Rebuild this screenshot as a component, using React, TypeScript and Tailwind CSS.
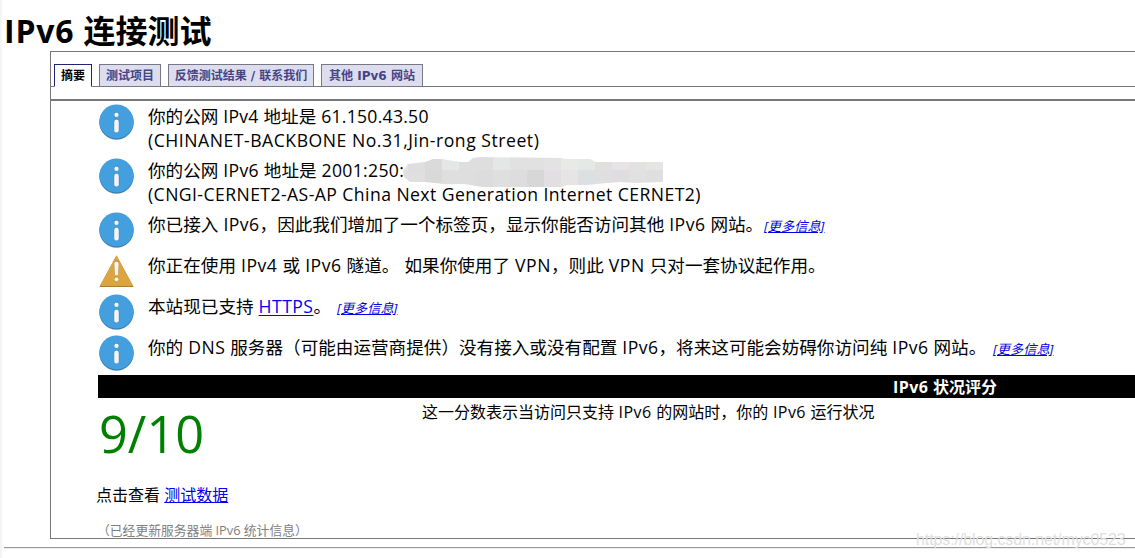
import React from 'react';

type Segment = {
  text: string;
  tracking?: string;
  link?: boolean;
};

interface Message {
  id: string;
  icon: 'info' | 'warning';
  lines: Segment[][];
  more?: string;
  masked?: boolean;
}

const tabs = [
  { label: '摘要', width: 'w-[38px]' },
  { label: '测试项目', width: 'w-[62px]' },
  { label: '反馈测试结果 / 联系我们', width: 'w-[146px]' },
  { label: '其他 IPv6 网站', width: 'w-[102px]' },
];

const messages: Message[] = [
  {
    id: 'ipv4',
    icon: 'info',
    lines: [
      [{ text: '你的公网 IPv4 地址是 61.150.43.50', tracking: 'tracking-[0.27px]' }],
      [{ text: '(CHINANET-BACKBONE No.31,Jin-rong Street)', tracking: 'tracking-[0.53px]' }],
    ],
  },
  {
    id: 'ipv6',
    icon: 'info',
    lines: [
      [{ text: '你的公网 IPv6 地址是 2001:250:', tracking: 'tracking-[0.33px]' }],
      [{ text: '(CNGI-CERNET2-AS-AP China Next Generation Internet CERNET2)', tracking: 'tracking-[0.43px]' }],
    ],
    masked: true,
  },
  {
    id: 'tab',
    icon: 'info',
    lines: [[{ text: '你已接入 IPv6，因此我们增加了一个标签页，显示你能否访问其他 IPv6 网站。' }]],
    more: 'left-[616px]',
  },
  {
    id: 'tunnel',
    icon: 'warning',
    lines: [[{ text: '你正在使用 IPv4 或 IPv6 隧道。 如果你使用了 VPN，则此 VPN 只对一套协议起作用。', tracking: 'tracking-[0.5px]' }]],
  },
  {
    id: 'https',
    icon: 'info',
    lines: [[{ text: '本站现已支持 ' }, { text: 'HTTPS', link: true }, { text: '。' }]],
    more: 'left-[189px]',
  },
  {
    id: 'dns',
    icon: 'info',
    lines: [[{ text: '你的 DNS 服务器（可能由运营商提供）没有接入或没有配置 IPv6，将来这可能会妨碍你访问纯 IPv6 网站。' }]],
    more: 'left-[845px]',
  },
];

// Latin runs are set slightly wider than the Chinese text around them
function MixedText({ text, tracking = 'tracking-[0.45px]' }: { text: string; tracking?: string }) {
  return (
    <>
      {text.split(/([ -~]+)/).map((part, i) =>
        i % 2 === 1 ? <span key={i} className={tracking}>{part}</span> : part
      )}
    </>
  );
}

function InfoIcon() {
  return (
    <svg className="block h-9 w-[35px]" viewBox="0 0 35 36">
      <ellipse cx="17.5" cy="19" rx="15.5" ry="17" fill="#d5d8da" />
      <circle cx="17.5" cy="18.3" r="17.2" fill="#3778a8" />
      <circle cx="17.5" cy="17.5" r="17.1" fill="#449fde" />
      <circle cx="17.5" cy="10.2" r="2.5" fill="#3380b8" />
      <rect x="14.8" y="14.9" width="5.4" height="13" rx="2.7" fill="#3380b8" />
      <circle cx="17.5" cy="10.8" r="2.2" fill="#f4f4f4" />
      <rect x="15.2" y="15.6" width="4.6" height="12.9" rx="2.3" fill="#f4f4f4" />
    </svg>
  );
}

function WarningIcon() {
  return (
    <svg className="block h-9 w-[35px]" viewBox="0 0 35 36">
      <path d="M17.5 2.6 34.6 34H.4Z" fill="#a97d2c" />
      <path d="M17.5 2.3 34.2 33H.8Z" fill="#dca440" />
      <path d="M15 10.2q0-2.6 2.5-2.6t2.5 2.6l-.6 10.6q-1.9 1.5-3.8 0Z" fill="#b9852d" />
      <path d="M15.3 10.8q0-2.3 2.2-2.3t2.2 2.3l-.6 11q-1.6 1-3.2 0Z" fill="#f4f4f4" />
      <circle cx="17.5" cy="25.8" r="2.4" fill="#b9852d" />
      <circle cx="17.5" cy="26.3" r="2" fill="#f4f4f4" />
    </svg>
  );
}

// Pixelated smudge covering the rest of the address
function AddressMask() {
  const top = ['#e5e5e5', '#dedede', '#dadada', '#e4e7e5', '#dedede', '#dedede', '#e4e7e5', '#e1e1e1', '#e1e1e1', '#e3e3e3', '#e8eae8', '#e6e8e6', '#e2e0de', '#e8e4e6', '#e2e2e2', '#e4e6e4', '#dcdcdc'];
  const bottom = ['#e0e0e0', '#dfdfdf', '#d9d9d9', '#dfdfdf', '#dedede', '#dcdcdc', '#dfdfdf', '#dddddd', '#d7d7d7', '#e1dfe1', '#e6e4e4', '#dce0e2', '#dfdfdf', '#dfdddf', '#e1e1e1', '#dfdfdf', '#dfe0e3'];
  return (
    <svg className="absolute -top-px left-[254px] h-[31px] w-[262px]" viewBox="402 157 262 31">
      <clipPath id="smudge">
        <path d="M403 171 408 164 425 162 433 159 442 159 460 162 468 162 473 158 480 157 560 158 567 159 590 159 596 162 663 162V182L635 183 620 182 596 184 588 185 567 185 561 187H482L464 184H444L425 182H410L404 177Z" />
      </clipPath>
      <g clipPath="url(#smudge)">
        {top.map((fill, i) => (
          <rect key={i} x={391 + i * 17} y="153" width="17.2" height="17.2" fill={fill} />
        ))}
        {bottom.map((fill, i) => (
          <rect key={i} x={391 + i * 17} y="170" width="17.2" height="18" fill={fill} />
        ))}
      </g>
    </svg>
  );
}

function MessageRow({ message }: { message: Message }) {
  return (
    <div className="flex gap-3.5 pb-[5px] pl-[48px] pt-px">
      <div className="h-[35px] w-[35px] shrink-0">{message.icon === 'info' ? <InfoIcon /> : <WarningIcon />}</div>
      <div className="relative whitespace-pre text-[17.6px] leading-6">
        {message.lines.map((line, i) => (
          <p key={i}>
            {line.map((segment, j) =>
              segment.link ? (
                <a key={j} className="tracking-[0.45px] text-[#0000ee] underline underline-offset-2">{segment.text}</a>
              ) : (
                <MixedText key={j} text={segment.text} tracking={segment.tracking} />
              )
            )}
          </p>
        ))}
        {message.more && (
          <a className={`absolute top-1.5 ${message.more} bg-[#fffff0] text-[13.2px] italic leading-[17px] text-[#0000ee] underline`}>
            [更多信息]
          </a>
        )}
        {message.masked && <AddressMask />}
      </div>
    </div>
  );
}

export default function App() {
  return (
    <div className="relative h-[558px] w-[1135px] overflow-hidden bg-white font-['Open_Sans','Noto_Sans_CJK_SC',sans-serif] text-black [font-kerning:none]">
      <div className="absolute left-0 top-0 h-full w-[3px] bg-linear-to-r from-[#f0f0f0] to-white" />
      <h1 className="h-[51px] whitespace-nowrap pl-1 pt-[9px] text-[32px] font-bold leading-[43px]">
        <MixedText text="IPv6 连接测试" tracking="tracking-[0.8px]" />
      </h1>

      <div className="ml-[50px] h-[488px] w-[1800px] border border-[#777]">
        <div className="flex h-[35px] items-end gap-[7px] border-b border-[#778] pl-[3px]">
          {tabs.map((tab, i) => (
            <div
              key={tab.label}
              className={`-mb-px h-[23px] shrink-0 whitespace-nowrap border pt-[2px] text-center font-['DejaVu_Sans','Noto_Sans_CJK_SC',sans-serif] text-xs font-bold leading-[18px] ${tab.width} ${
                i === 0 ? 'border-[#227] border-b-white bg-white text-black' : 'border-[#778] bg-[#dde] text-[#448]'
              }`}
            >
              {tab.label}
            </div>
          ))}
        </div>

        <div className="mt-3 border-t-2 border-[#777] pt-0.5">
          {messages.map((message) => (
            <MessageRow key={message.id} message={message} />
          ))}
        </div>

        <div className="ml-[47px] h-[23px] w-[1694px] bg-black pt-px text-center text-base font-bold leading-[23px] text-white">
          <MixedText text="IPv6 状况评分" />
        </div>
        <div className="ml-[47px] flex h-[82px]">
          <div className="w-[324px] pl-px text-[50.5px] leading-[71px] text-[#008000]">9/10</div>
          <p className="pt-[3px] text-base leading-[22px]">
            <MixedText text="这一分数表示当访问只支持 IPv6 的网站时，你的 IPv6 运行状况" />
          </p>
        </div>
        <p className="ml-[45px] mt-1 text-base leading-[22px]">
          点击查看 <a className="text-[#0000ee] underline">测试数据</a>
        </p>
        <p className="ml-[46px] mt-4 text-[12.8px] leading-[17px] text-[#808080]">（已经更新服务器端 IPv6 统计信息）</p>
      </div>

      <hr className="ml-1 mt-2 h-0.5 border-b border-t border-b-[#eee] border-t-[#999]" />
      <div className="absolute left-[916px] top-[529px] whitespace-nowrap font-['Liberation_Sans',sans-serif] text-base leading-[22px] tracking-[-0.1px] text-[#dedede]">
        https://blog.csdn.net/myc0523
      </div>
    </div>
  );
}
